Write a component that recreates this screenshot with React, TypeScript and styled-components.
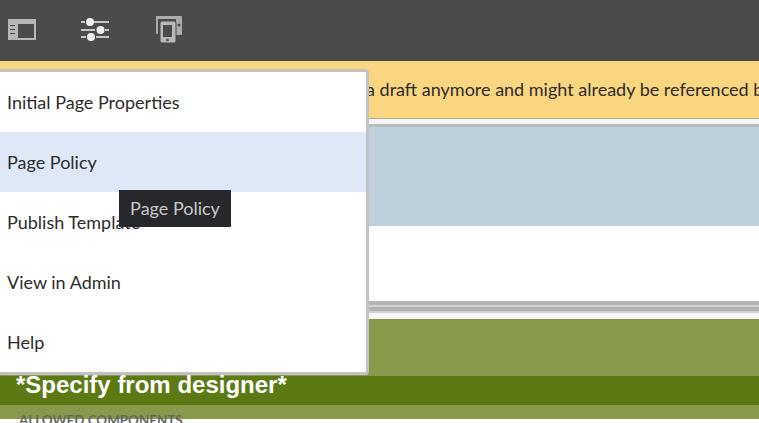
import React from "react";
import styled, { createGlobalStyle } from "styled-components";

const Global = createGlobalStyle`
  html, body { margin: 0; padding: 0; background: #fff; overflow: hidden; }
  body { width: 759px; height: 423px; font-family: "Lato", "Open Sans", sans-serif; }
`;
const Page = styled.div`
  position: relative; width: 759px; height: 423px; overflow: hidden;
  display: flex; flex-direction: column;
`;
const Toolbar = styled.header`
  height: 61px; flex: none; background: #4b4b4b; display: flex; align-items: center;
  padding: 0 0 2px 7px; box-sizing: border-box; gap: 44px;
`;
const Banner = styled.div`
  height: 58px; flex: none; background: #fbd680; border-bottom: 1px solid #b5aa8c; box-sizing: border-box;
  color: #2c2c2c; font-size: 18px; line-height: 57px; white-space: nowrap; padding-left: 366px; overflow: hidden;
`;
const Gap = styled.div<{ $h: number; $c: string }>`
  flex: none; height: ${(p) => p.$h}px; background: ${(p) => p.$c};
`;
const Title = styled.div`
  flex: none; height: 29px; background: #5c7a14; color: #fff; padding-left: 16px;
  font: bold 24px/17px "Liberation Sans", Arial, sans-serif;
`;
const Allowed = styled.div`
  flex: none; height: 14px; background: #88994c; color: #65675f; padding-left: 19px;
  font-size: 13.4px; line-height: 30px; font-weight: 700; white-space: nowrap;
`;
const Menu = styled.nav`
  position: absolute; left: -3px; top: 69px; width: 372px; height: 306px; box-sizing: border-box;
  background: #fff; border: 3px solid #c2c2c2; border-radius: 4px;
`;
const Item = styled.div<{ $active?: boolean }>`
  height: 60px; line-height: 60px; padding-left: 7px; font-size: 18px; color: #2c2c2c;
  background: ${(p) => (p.$active ? "#dfe8f7" : "transparent")};
`;
const Tip = styled.div`
  position: absolute; left: 119px; top: 190px; width: 112px; height: 37px; box-sizing: border-box;
  background: #26282c; color: #c9c9c9; font-size: 18px; line-height: 37px; text-align: center;
`;

const LayoutIcon = () => (
  <svg width="29" height="22" viewBox="0 0 29 22">
    <path fill="#b8b8b8" fillRule="evenodd" d="M1 0h28v21H1zM11 5v14h16V5z" />
    <path stroke="#4b4b4b" strokeWidth="1.2" d="M3 6.5h5M3 10.5h5M3 14.5h5" />
  </svg>
);
const SlidersIcon = () => (
  <svg width="30" height="26" viewBox="0 0 30 26">
    <g stroke="#efefef" strokeWidth="1.6">
      <path d="M1 5h4M14 5h15M1 13h14M25 13h4M1 20h5M16 20h13" />
    </g>
    <g fill="#efefef">
      <circle cx="10" cy="5" r="4" />
      <circle cx="20.5" cy="13" r="4" />
      <circle cx="11" cy="20" r="4" />
    </g>
  </svg>
);
const DevicesIcon = () => (
  <svg width="28" height="27" viewBox="-1 0 28 27">
    <path fill="#ababab" d="M2 0h24a1 1 0 0 1 1 1v17a1 1 0 0 1-1 1h-5V3H3v15H2a1 1 0 0 1-1-1V1a1 1 0 0 1 1-1z" />
    <path fill="#b8b8b8" stroke="#4b4b4b" strokeWidth="1" fillRule="evenodd" d="M7 5h12a2 2 0 0 1 2 2v18a2 2 0 0 1-2 2H7a2 2 0 0 1-2-2V7a2 2 0 0 1 2-2z" />
    <path fill="#4b4b4b" d="M8 9h9v12H8z" />
    <circle cx="24" cy="9" r="1.6" fill="#4b4b4b" />
    <circle cx="12.5" cy="24" r="1.3" fill="#4b4b4b" />
  </svg>
);

export default function App() {
  return (
    <Page>
      <Global />
      <Toolbar>
        <LayoutIcon />
        <SlidersIcon />
        <DevicesIcon />
      </Toolbar>
      <Banner>a draft anymore and might already be referenced by pages</Banner>
      <Gap $h={5} $c="#f4f4f4" />
      <Gap $h={3} $c="#b9bcbe" />
      <Gap $h={99} $c="#bed0d9" />
      <Gap $h={75} $c="#ffffff" />
      <Gap $h={4} $c="#b4b4b4" />
      <Gap $h={2} $c="#d2d2d2" />
      <Gap $h={4} $c="#b4b4b4" />
      <Gap $h={2} $c="#d2d2d2" />
      <Gap $h={6} $c="#f8f8f8" />
      <Gap $h={57} $c="#88994c" />
      <Title>*Specify from designer*</Title>
      <Allowed>ALLOWED COMPONENTS</Allowed>
      <Menu>
        <Item>Initial Page Properties</Item>
        <Item $active>Page Policy</Item>
        <Item>Publish Template</Item>
        <Item>View in Admin</Item>
        <Item>Help</Item>
      </Menu>
      <Tip>Page Policy</Tip>
    </Page>
  );
}
